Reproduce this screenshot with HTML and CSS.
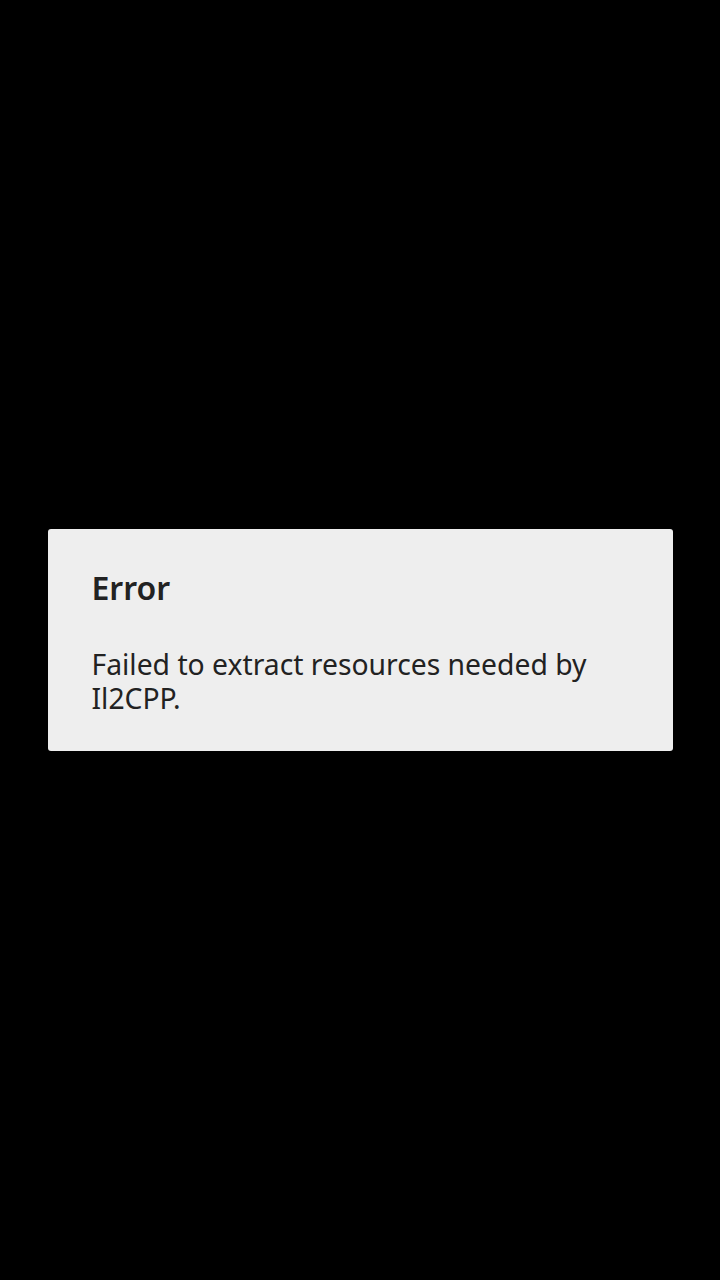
FILE: index.html
```html
<!DOCTYPE html>
<html>
<head>
<meta charset="utf-8">
<link rel="stylesheet" href="styles.css">
</head>
<body>
<div class="screen">
  <div class="dialog">
    <div class="title">Error</div>
    <div class="message">Failed to extract resources needed by Il2CPP.</div>
  </div>
</div>
</body>
</html>
```
FILE: styles.css
```css
html, body {
  margin: 0;
  padding: 0;
  background: #000;
}
.screen {
  width: 720px;
  height: 1280px;
  display: flex;
  align-items: center;
  justify-content: center;
}
.dialog {
  box-sizing: border-box;
  width: 625px;
  height: 222px;
  background: #eeeeee;
  border-radius: 3px;
  padding: 37px 44px 0 44px;
  font-family: "Noto Sans", "Open Sans", sans-serif;
  color: #222222;
}
.title {
  font-size: 32px;
  font-weight: 600;
  line-height: 44px;
}
.message {
  margin-top: 37px;
  font-size: 28.3px;
  line-height: 34px;
}
```
